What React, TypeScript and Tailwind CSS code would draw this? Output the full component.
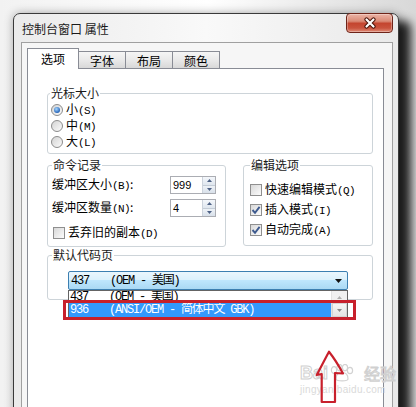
import React from "react";

const mono = "font-['Liberation_Mono','Noto_Sans_CJK_SC',monospace] text-[12px] tracking-[-1.2px]";

function Key({ k }: { k: string }) {
  return (
    <span className="font-['Liberation_Mono',monospace] text-[11px] tracking-[-0.6px]">({k})</span>
  );
}

function Group({
  title,
  legendClass,
  className,
  children,
}: {
  title: string;
  legendClass: string;
  className: string;
  children: React.ReactNode;
}) {
  return (
    <fieldset className={`rounded-[3px] border border-[#cdd4d9] ${className}`}>
      <legend className={`px-[1px] text-[#1a1a1a] ${legendClass}`}>{title}</legend>
      {children}
    </fieldset>
  );
}

function Radio({ checked, children }: { checked?: boolean; children: React.ReactNode }) {
  return (
    <div className="flex h-4 items-center gap-[3px]">
      <span className="flex h-[12px] w-[12px] items-center justify-center rounded-full border border-[#8c8c8c] bg-gradient-to-br from-[#d4d4d4] to-[#fbfbfb]">
        {checked && (
          <span className="h-[6px] w-[6px] rounded-full bg-[radial-gradient(circle_at_40%_35%,#a8d8ff,#1c5cb4_75%)]" />
        )}
      </span>
      <span>{children}</span>
    </div>
  );
}

function Check({ checked, children }: { checked?: boolean; children: React.ReactNode }) {
  return (
    <div className="flex h-4 items-center gap-[3px]">
      <span className="flex h-[12px] w-[12px] items-center justify-center border border-[#8f8f8f] bg-gradient-to-br from-[#d8d8d8] to-[#fcfcfc]">
        {checked && (
          <svg width="10" height="10" viewBox="0 0 10 10">
            <path d="M1.5 5 L4 7.8 L8.6 1.8" fill="none" stroke="#3e5a8e" strokeWidth="1.9" />
          </svg>
        )}
      </span>
      <span>{children}</span>
    </div>
  );
}

function Tri({ up, color = "#4d6185" }: { up?: boolean; color?: string }) {
  return (
    <svg width="5" height="3" viewBox="0 0 5 3">
      <path d={up ? "M0 3 L2.5 0 L5 3 Z" : "M0 0 L5 0 L2.5 3 Z"} fill={color} />
    </svg>
  );
}

function Spin({ value }: { value: string }) {
  return (
    <div className="flex h-[18px] w-[46px] border border-[#abadb3] bg-white">
      <span className="flex-1 pl-[2px] font-['Liberation_Sans',sans-serif] text-[11px] leading-[16px]">
        {value}
      </span>
      <div className="flex w-[13px] flex-col border-l border-[#ccd3dc]">
        <div className="flex flex-1 items-center justify-center border-b border-[#c3ccd6] bg-gradient-to-b from-[#f4f7fb] to-[#dfe6ee]">
          <Tri up />
        </div>
        <div className="flex flex-1 items-center justify-center bg-gradient-to-b from-[#eef2f7] to-[#d9e1ea]">
          <Tri />
        </div>
      </div>
    </div>
  );
}

function CloseButton() {
  return (
    <div className="-mt-px flex h-[20px] w-[47px] items-center justify-center rounded-[4px] border border-[#6e2419] bg-[linear-gradient(#ecb4a6,#da8a76_40%,#c4452f_52%,#c9533d_78%,#e08d78)] shadow-[inset_0_0_0_1px_rgba(255,255,255,0.3)]">
      <svg width="14" height="12" viewBox="0 0 14 12">
        <path d="M3.5 2.5 L10.5 9.5 M10.5 2.5 L3.5 9.5" stroke="#4a1309" strokeWidth="4.2" strokeLinecap="round" />
        <path d="M3.5 2.5 L10.5 9.5 M10.5 2.5 L3.5 9.5" stroke="#ffffff" strokeWidth="2.2" strokeLinecap="round" />
      </svg>
    </div>
  );
}

function Tab({ label, active }: { label: string; active?: boolean }) {
  if (active) {
    return (
      <div className="relative z-10 -mb-px flex h-[21px] w-[52px] justify-center border-x border-t border-[#898c95] bg-white pt-[2px]">
        {label}
      </div>
    );
  }
  return (
    <div className="flex h-[17px] w-[47px] justify-center border-r border-t border-[#898c95] bg-gradient-to-b from-[#f5f5f5] via-[#e9e9e9] to-[#d8d8d8] pt-[1px]">
      {label}
    </div>
  );
}

function Paw() {
  return (
    <svg width="28" height="18" viewBox="0 0 28 18" fill="none" stroke="#d2d2d2" strokeWidth="1.2">
      <ellipse cx="6" cy="6" rx="2.6" ry="3.4" />
      <ellipse cx="11.5" cy="3.6" rx="2.6" ry="3.2" />
      <ellipse cx="17" cy="3.6" rx="2.6" ry="3.2" />
      <ellipse cx="22" cy="6.5" rx="2.6" ry="3.2" />
      <path d="M8 15 C8 10 11 8.5 14 8.5 C17 8.5 20 10 20 15 C20 17.5 8 17.5 8 15 Z" />
    </svg>
  );
}

export default function App() {
  return (
    <div className="h-[407px] w-[416px] overflow-hidden bg-gradient-to-r from-[#f2f2f2] via-white to-[#d8d8d8] pl-[13px] pt-[13px] font-['Noto_Sans_CJK_SC',sans-serif] text-[12px] leading-4 text-black">
      <div className="flex h-[420px] w-[386px] flex-col rounded-t-[7px] border border-[#3a3a3a] bg-gradient-to-r from-[#ebebeb] via-[#f9f9f9] to-[#e9e9e9] shadow-[12px_8px_10px_rgba(0,0,0,0.85),0_0_10px_rgba(0,0,0,0.3)]">
        <div className="flex h-[28px] shrink-0 justify-between pl-[8px] pr-[5px]">
          <span className="self-center pt-[1px] text-[#1a1a1a]">控制台窗口 属性</span>
          <CloseButton />
        </div>

        <div className="flex flex-1 pl-[7px] pr-[5px]">
          <div className="flex flex-1 flex-col border border-[#a0a0a0] bg-[#f6f6f6] pl-[5px] pr-[8px] pt-[5px]">
            <div className="flex items-end">
              <Tab label="选项" active />
              <Tab label="字体" />
              <Tab label="布局" />
              <Tab label="颜色" />
            </div>

            <div className="relative flex flex-1 flex-col border border-[#898c95] bg-white pl-[19px] pr-[10px] pt-[16px]">
              <Group title="光标大小" legendClass="ml-[2px]" className="w-full">
                <div className="flex flex-col pb-[3px] pl-[3px] pt-[1px]">
                  <Radio checked>
                    小<Key k="S" />
                  </Radio>
                  <Radio>
                    中<Key k="M" />
                  </Radio>
                  <Radio>
                    大<Key k="L" />
                  </Radio>
                </div>
              </Group>

              <div className="mt-[3px] flex items-start gap-[17px]">
                <Group title="命令记录" legendClass="ml-[4px]" className="w-[179px]">
                  <div className="flex flex-col pb-[5px] pl-[4px] pt-[3px]">
                    <div className="flex h-[18px] items-center">
                      <span className="w-[118px]">
                        缓冲区大小<Key k="B" />:
                      </span>
                      <Spin value="999" />
                    </div>
                    <div className="mt-[5px] flex h-[18px] items-center">
                      <span className="w-[118px]">
                        缓冲区数量<Key k="N" />:
                      </span>
                      <Spin value="4" />
                    </div>
                    <div className="mt-[8px] pl-[1px]">
                      <Check>
                        丢弃旧的副本<Key k="D" />
                      </Check>
                    </div>
                  </div>
                </Group>

                <Group title="编辑选项" legendClass="ml-[6px]" className="w-[130px]">
                  <div className="flex flex-col gap-[4px] pb-[7px] pl-[6px] pt-[9px]">
                    <Check>
                      快速编辑模式<Key k="Q" />
                    </Check>
                    <Check checked>
                      插入模式<Key k="I" />
                    </Check>
                    <Check checked>
                      自动完成<Key k="A" />
                    </Check>
                  </div>
                </Group>
              </div>

              <Group title="默认代码页" legendClass="ml-[4px]" className="w-full">
                <div className="pb-[9px] pl-[20px] pt-[8px]">
                  <div className="relative h-[19px] w-[280px]">
                    <div className="flex h-full items-center rounded-[2px] border border-[#3c7fb1] bg-[linear-gradient(#eaf6fd,#d9f0fc_50%,#bee6fd_50%,#a9d9f4)] pl-[2px] pr-[5px]">
                      <span className={`${mono} w-[39px]`}>437</span>
                      <span className={mono}>(OEM - 美国)</span>
                      <span className="ml-auto flex items-center">
                        <svg width="7" height="4" viewBox="0 0 7 4">
                          <path d="M0 0 L7 0 L3.5 4 Z" fill="#111111" />
                        </svg>
                      </span>
                    </div>

                    <div className="absolute left-0 top-full z-20 flex w-full border border-[#646464] bg-white">
                      <div className="flex flex-1 flex-col">
                        <div className="flex h-[12px] items-center overflow-hidden pl-[1px] leading-[12px]">
                          <span className={`${mono} w-[39px]`}>437</span>
                          <span className={mono}>(OEM - 美国)</span>
                        </div>
                        <div className="flex h-[14px] items-center bg-[#3399ff] pl-[1px] text-white">
                          <span className={`${mono} w-[39px]`}>936</span>
                          <span className={mono}>(ANSI/OEM - 简体中文 GBK)</span>
                        </div>
                      </div>
                      <div className="flex w-[16px] flex-col border-l border-[#e2e2e2] bg-[#f0f0f0]">
                        <div className="flex h-[12px] items-center justify-center">
                          <Tri up color="#b0b0b0" />
                        </div>
                        <div className="flex h-[14px] items-center justify-center border border-[#d4d4d4] bg-gradient-to-b from-[#f6f6f6] to-[#e4e4e4]">
                          <Tri color="#8a8a8a" />
                        </div>
                      </div>
                    </div>

                    <div className="absolute left-[-5px] top-[29px] z-30 h-[20px] w-[293px] border-[3px] border-[#c8202c]" />
                  </div>
                </div>
              </Group>

              <div className="absolute left-[272px] top-[295px] flex w-max flex-col whitespace-nowrap">
                <div className="flex items-end">
                  <span className="font-['Liberation_Sans',sans-serif] text-[18px] font-bold leading-[18px] text-white [-webkit-text-stroke:1px_#d0d0d0]">
                    Bai
                  </span>
                  <Paw />
                  <span className="ml-[8px] text-[16px] leading-[18px] text-white [-webkit-text-stroke:1px_#d0d0d0]">
                    经验
                  </span>
                </div>
                <span className="mt-[3px] font-['Liberation_Sans',sans-serif] text-[10px] leading-[10px] tracking-[0.3px] text-[#dadada]">
                  jingyan.baidu.com
                </span>
              </div>

              <svg
                className="absolute left-[286px] top-[280px]"
                width="32"
                height="56"
                viewBox="0 0 32 56"
                fill="none"
              >
                <path
                  d="M15 2.7 C11 10 7 18 2.7 26 L7.7 25 L7.7 53 L21 53 L21 24 L29 24.5 C25 17 20 9 15 2.7 Z"
                  stroke="#c8202c"
                  strokeWidth="2.2"
                  strokeLinejoin="round"
                />
              </svg>
            </div>
          </div>
        </div>
      </div>
    </div>
  );
}
